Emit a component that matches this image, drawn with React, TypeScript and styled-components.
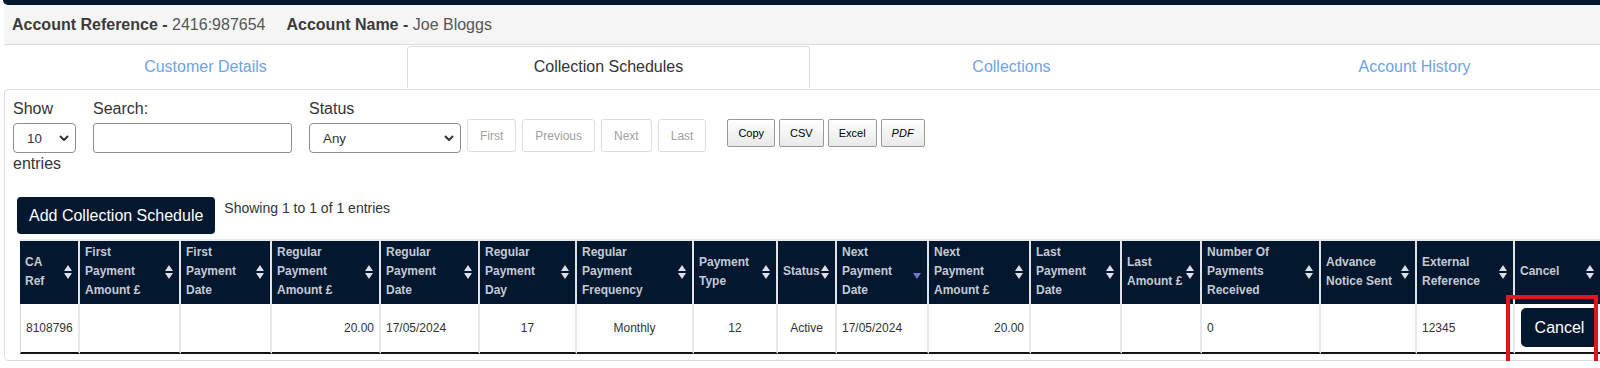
import React from "react";
import styled, { createGlobalStyle } from "styled-components";

const NAVY = "#03172f";

type Column = {
  w: number;
  head: string[];
  value?: string;
  align?: "left" | "right" | "center";
  sort?: "both" | "desc";
  cancel?: boolean;
};

const columns: Column[] = [
  { w: 60, head: ["CA", "Ref"], value: "8108796" },
  { w: 101, head: ["First", "Payment", "Amount £"] },
  { w: 91, head: ["First", "Payment", "Date"] },
  { w: 109, head: ["Regular", "Payment", "Amount £"], value: "20.00", align: "right" },
  { w: 99, head: ["Regular", "Payment", "Date"], value: "17/05/2024" },
  { w: 97, head: ["Regular", "Payment", "Day"], value: "17", align: "center" },
  { w: 117, head: ["Regular", "Payment", "Frequency"], value: "Monthly", align: "center" },
  { w: 84, head: ["Payment", "Type"], value: "12", align: "center" },
  { w: 59, head: ["Status"], value: "Active", align: "center" },
  { w: 92, head: ["Next", "Payment", "Date"], value: "17/05/2024", sort: "desc" },
  { w: 102, head: ["Next", "Payment", "Amount £"], value: "20.00", align: "right" },
  { w: 91, head: ["Last", "Payment", "Date"] },
  { w: 80, head: ["Last", "Amount £"] },
  { w: 119, head: ["Number Of", "Payments", "Received"], value: "0" },
  { w: 96, head: ["Advance", "Notice Sent"] },
  { w: 98, head: ["External", "Reference"], value: "12345" },
  { w: 87, head: ["Cancel"], cancel: true },
];

const tabs = ["Customer Details", "Collection Schedules", "Collections", "Account History"];

function SortIcon({ dir = "both" }: { dir?: "both" | "desc" }) {
  return (
    <SortSvg width="8" height="14" viewBox="0 0 8 14">
      {dir === "both" && <path d="M0 6 L4 0 L8 6 Z" fill="#dde1e7" />}
      <path d="M0 8 L8 8 L4 14 Z" fill={dir === "desc" ? "#7474d8" : "#dde1e7"} />
    </SortSvg>
  );
}

function Chevron() {
  return (
    <svg width="10" height="6" viewBox="0 0 10 6">
      <path d="M1 1 L5 5 L9 1" fill="none" stroke="#333" strokeWidth="2" />
    </svg>
  );
}

function CollectionSchedules() {
  return (
    <Page>
      <GlobalStyle />
      <TopBar />
      <InfoBar>
        <InfoItem>
          <b>Account Reference - </b>2416:987654
        </InfoItem>
        <InfoItem>
          <b>Account Name - </b>Joe Bloggs
        </InfoItem>
      </InfoBar>
      <Tabs>
        {tabs.map((t) => (
          <Tab key={t} $active={t === "Collection Schedules"}>
            {t}
          </Tab>
        ))}
      </Tabs>
      <Panel>
        <Toolbar>
          <Field $mr={17}>
            <Label>Show</Label>
            <FakeSelect $w={63}>
              <span>10</span>
              <Chevron />
            </FakeSelect>
            <Label>entries</Label>
          </Field>
          <Field $mr={17}>
            <Label>Search:</Label>
            <SearchInput />
          </Field>
          <Field $mr={6}>
            <Label>Status</Label>
            <FakeSelect $w={152}>
              <span>Any</span>
              <Chevron />
            </FakeSelect>
          </Field>
          <Pager>
            <PageButton>First</PageButton>
            <PageButton>Previous</PageButton>
            <PageButton>Next</PageButton>
            <PageButton>Last</PageButton>
          </Pager>
          <ExportGroup>
            <ExportButton>Copy</ExportButton>
            <ExportButton>CSV</ExportButton>
            <ExportButton>Excel</ExportButton>
            <ExportButton $italic>PDF</ExportButton>
          </ExportGroup>
        </Toolbar>

        <ActionRow>
          <AddButton>Add Collection Schedule</AddButton>
          <InfoText>Showing 1 to 1 of 1 entries</InfoText>
        </ActionRow>

        <Table>
          <colgroup>
            {columns.map((c, i) => (
              <Col key={i} $w={c.w} />
            ))}
          </colgroup>
          <thead>
            <tr>
              {columns.map((c, i) => (
                <Th key={i}>
                  <HeadInner>
                    <HeadText>
                      {c.head.map((line, j) => (
                        <React.Fragment key={j}>
                          {j > 0 && <br />}
                          {line}
                        </React.Fragment>
                      ))}
                    </HeadText>
                    <SortIcon dir={c.sort} />
                  </HeadInner>
                </Th>
              ))}
            </tr>
          </thead>
          <tbody>
            <tr>
              {columns.map((c, i) => (
                <Td key={i} $align={c.align ?? "left"} $first={i === 0}>
                  {c.cancel ? (
                    <>
                      <CancelButton>Cancel</CancelButton>
                      <Highlight />
                    </>
                  ) : (
                    c.value
                  )}
                </Td>
              ))}
            </tr>
          </tbody>
        </Table>
      </Panel>
    </Page>
  );
}

const GlobalStyle = createGlobalStyle`
  body {
    margin: 0;
    background: #fff;
    overflow: hidden;
    font-family: "Liberation Sans", Arial, sans-serif;
    color: #333;
  }
`;

const Page = styled.div`
  width: 1612px;
  margin-left: 4px;
`;

const TopBar = styled.div`
  height: 5px;
  margin-left: -1px;
  background: ${NAVY};
  border-bottom-left-radius: 5px;
`;

const InfoBar = styled.div`
  height: 39px;
  display: flex;
  align-items: center;
  gap: 21px;
  padding-left: 8px;
  background: #f5f5f5;
  border-bottom: 1px solid #dcdcdc;
  font-size: 16px;
`;

const InfoItem = styled.span`
  color: #555;

  b {
    color: #3b3b3b;
  }
`;

const Tabs = styled.div`
  display: grid;
  grid-template-columns: repeat(4, 403px);
  border-bottom: 1px solid #dddddd;
`;

const Tab = styled.div<{ $active?: boolean }>`
  height: 40px;
  margin-top: 1px;
  margin-bottom: -1px;
  display: flex;
  align-items: center;
  justify-content: center;
  font-size: 16px;
  color: ${(p) => (p.$active ? "#333" : "#6fa3e8")};
  background: #fff;
  border: 1px solid ${(p) => (p.$active ? "#dddddd" : "transparent")};
  border-bottom-color: ${(p) => (p.$active ? "#fff" : "transparent")};
  border-radius: 4px 4px 0 0;
`;

const Panel = styled.div`
  margin-top: 1px;
  padding: 9px 0 6px 8px;
  border: 1px solid #dddddd;
  border-radius: 4px;
`;

const Toolbar = styled.div`
  display: flex;
  align-items: flex-start;
`;

const Field = styled.div<{ $mr: number }>`
  display: flex;
  flex-direction: column;
  margin-right: ${(p) => p.$mr}px;
`;

const Label = styled.div`
  font-size: 16px;
  line-height: 20px;
  color: #333;

  & + * {
    margin-top: 4px;
  }
`;

const FakeSelect = styled.div<{ $w: number }>`
  box-sizing: border-box;
  width: ${(p) => p.$w}px;
  height: 30px;
  display: flex;
  align-items: center;
  justify-content: space-between;
  padding: 0 6px 0 13px;
  border: 1px solid #8f8f8f;
  border-radius: 4px;
  font-size: 13.333px;
  color: #333;
  background: #fff;

  & + ${Label} {
    margin-top: 1px;
  }
`;

const SearchInput = styled.div`
  box-sizing: border-box;
  width: 199px;
  height: 30px;
  border: 1px solid #8f8f8f;
  border-radius: 3px;
`;

const Pager = styled.div`
  display: flex;
  gap: 6px;
  margin-top: 20px;
`;

const PageButton = styled.div`
  height: 33px;
  box-sizing: border-box;
  padding: 0 12px;
  display: flex;
  align-items: center;
  border: 1px solid #dddddd;
  border-radius: 3px;
  font-size: 12px;
  color: #a0a0a0;
`;

const ExportGroup = styled.div`
  display: flex;
  gap: 4px;
  margin: 20px 0 0 21px;
`;

const ExportButton = styled.div<{ $italic?: boolean }>`
  height: 28px;
  box-sizing: border-box;
  padding: 0 10px;
  display: flex;
  align-items: center;
  border: 1px solid #999;
  border-radius: 2px;
  background: linear-gradient(to bottom, #ffffff 0%, #e9e9e9 100%);
  font-size: 11px;
  font-style: ${(p) => (p.$italic ? "italic" : "normal")};
  color: #000;
`;

const ActionRow = styled.div`
  display: flex;
  align-items: flex-start;
  margin-top: 23px;
  padding-left: 4px;
`;

const AddButton = styled.div`
  height: 37px;
  padding: 0 12px;
  display: flex;
  align-items: center;
  background: ${NAVY};
  color: #fff;
  border-radius: 4px;
  font-size: 16px;
`;

const InfoText = styled.div`
  margin: 2px 0 0 9px;
  font-size: 14px;
  line-height: 18px;
  color: #333;
`;

const Table = styled.table`
  margin: 5px 0 0 7px;
  width: 1582px;
  table-layout: fixed;
  border-collapse: separate;
  border-spacing: 0;
  border-top: 2px solid #e8eaed;
`;

const Col = styled.col<{ $w: number }>`
  width: ${(p) => p.$w}px;
`;

const Th = styled.th`
  height: 63px;
  box-sizing: border-box;
  padding: 2px 6px 4px 5px;
  background: ${NAVY};
  border-right: 2px solid #dfe2e6;
  color: #c3cad3;
  font-size: 12px;
  font-weight: bold;
  line-height: 19px;
  text-align: left;
  vertical-align: middle;
`;

const HeadInner = styled.div`
  display: flex;
  align-items: center;
  justify-content: space-between;
`;

const HeadText = styled.span`
  white-space: nowrap;
`;

const SortSvg = styled.svg`
  flex-shrink: 0;
`;

const Td = styled.td<{ $align: string; $first?: boolean }>`
  position: relative;
  height: 48px;
  box-sizing: border-box;
  padding: 4px 5px 5px;
  border-right: 2px solid #e6e8eb;
  border-left: ${(p) => (p.$first ? "1px solid #d3d6da" : "none")};
  border-bottom: 2px solid #141414;
  font-size: 12px;
  color: #333;
  text-align: ${(p) => p.$align};
  vertical-align: middle;
`;

const CancelButton = styled.div`
  height: 39px;
  width: 77px;
  margin-left: 1px;
  display: flex;
  align-items: center;
  justify-content: center;
  background: ${NAVY};
  border-radius: 5px;
  color: #fff;
  font-size: 16px;
`;

const Highlight = styled.div`
  position: absolute;
  left: -9px;
  top: -9px;
  width: 92px;
  height: 73px;
  box-sizing: border-box;
  border: 4px solid #e4141c;
  pointer-events: none;
`;

export default CollectionSchedules;
